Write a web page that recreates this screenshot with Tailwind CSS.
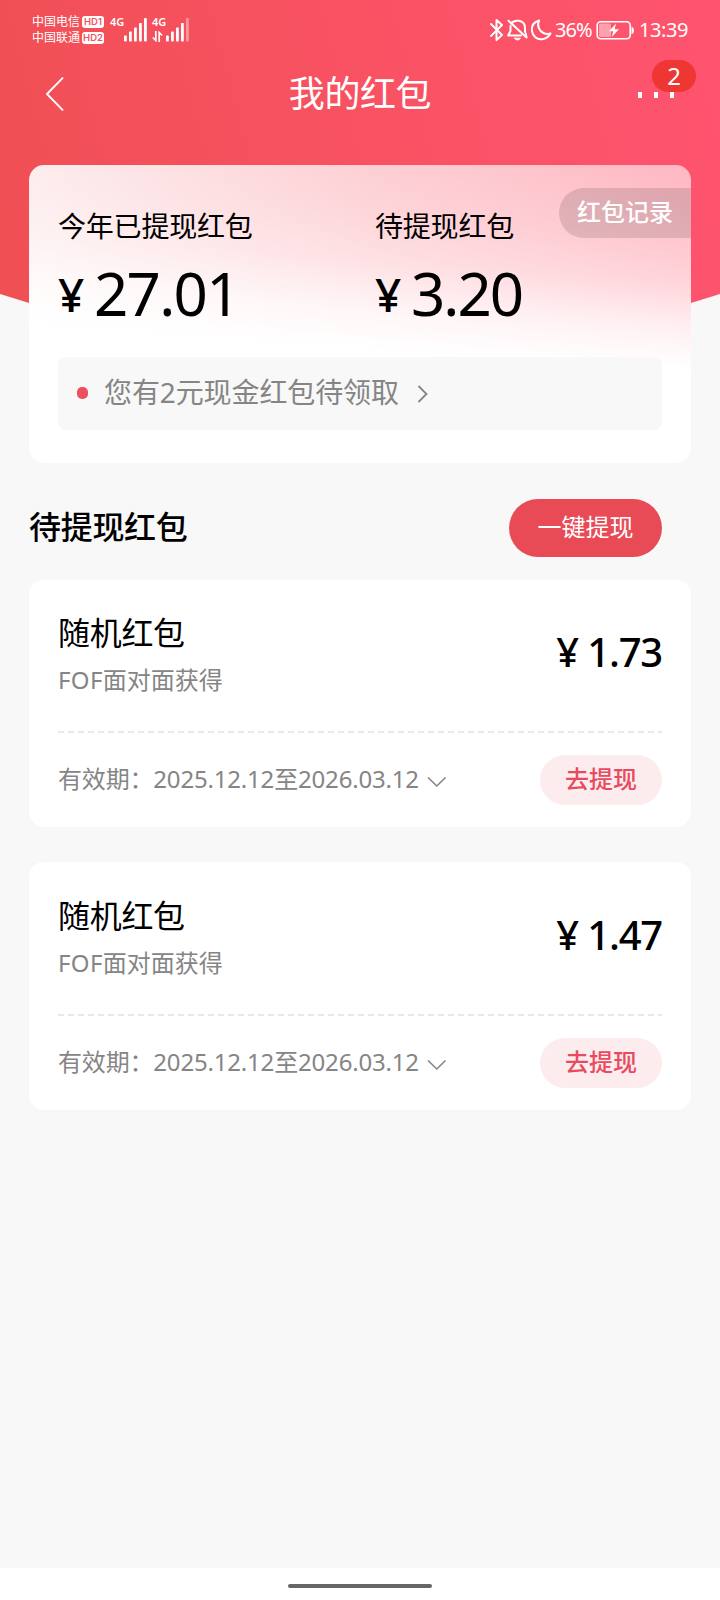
<!DOCTYPE html>
<html lang="zh-CN">
<head>
<meta charset="utf-8">
<title>我的红包</title>
<script src="https://cdn.jsdelivr.net/npm/@tailwindcss/browser@4"></script>
</head>
<body class="bg-[#f8f8f8]">
<div class="relative isolate flex h-[1600px] w-[720px] flex-col overflow-hidden bg-[#f8f8f8] font-['Noto_Sans','Noto_Sans_CJK_SC',sans-serif] text-black">

  <!-- curved header background -->
  <svg class="absolute left-0 top-0 -z-10" width="720" height="360" viewBox="0 0 720 360">
    <defs><linearGradient id="head" gradientUnits="userSpaceOnUse" x1="0" y1="250" x2="720" y2="60"><stop offset="0" stop-color="#f04f54"/><stop offset=".5" stop-color="#f85262"/><stop offset="1" stop-color="#ff536f"/></linearGradient></defs>
    <path d="M0 0H720V294Q360 410 0 294Z" fill="url(#head)"/>
  </svg>

  <!-- status bar -->
  <div class="flex h-[60px] items-start justify-between pl-8 pr-[31px] text-white">
    <div class="flex pt-[14px]">
      <div class="flex flex-col gap-[2px] pt-[1px] text-[12px] leading-[14px]">
        <div class="flex items-center gap-[2px]"><span>中国电信</span><span class="flex h-[12px] w-[22px] items-center justify-center rounded-[3px] bg-white font-['Inter'] text-[9.5px] leading-none font-semibold text-[#f5525e]">HD1</span></div>
        <div class="flex items-center gap-[2px]"><span>中国联通</span><span class="flex h-[12px] w-[22px] items-center justify-center rounded-[3px] bg-white font-['Inter'] text-[9.5px] leading-none font-semibold text-[#f5525e]">HD2</span></div>
      </div>
      <span class="ml-[6px] mt-[2px] w-[14px] text-[11px] leading-[12px] font-semibold">4G</span>
      <svg class="mt-1" width="23" height="24" viewBox="0 0 23 24" fill="#fff"><rect y="17.500" width="2.800" height="6" rx=".8"/><rect x="5" y="13.500" width="2.800" height="10" rx=".8"/><rect x="10" y="9.500" width="2.800" height="14" rx=".8"/><rect x="15" y="5" width="2.800" height="18.500" rx=".8"/><rect x="20" y="0" width="2.800" height="23.500" rx=".8"/></svg>
      <div class="ml-[5px] mt-[2px] flex w-[14px] flex-col">
        <span class="text-[11px] leading-[12px] font-semibold">4G</span>
        <svg class="mt-[3px]" width="12" height="11" viewBox="0 0 12 11" fill="none" stroke="#fff" stroke-width="1.700"><path d="M3.800 0V9.500L.8 6.500M7.200 11V1.500L10.200 4.500"/></svg>
      </div>
      <svg class="mt-1" width="23" height="24" viewBox="0 0 23 24" fill="#fff"><rect y="17.500" width="2.800" height="6" rx=".8"/><rect x="5" y="13.500" width="2.800" height="10" rx=".8"/><rect x="10" y="9.500" width="2.800" height="14" rx=".8"/><rect x="15" y="5" width="2.800" height="18.500" rx=".8"/><rect x="20" y="0" width="2.800" height="23.500" rx=".8" opacity=".4"/></svg>
    </div>
    <div class="flex items-center pt-[18px]">
      <svg width="62" height="24" viewBox="0 0 62 24" fill="none" stroke="#fff" stroke-width="2" stroke-linejoin="round" stroke-linecap="round">
        <path d="M1 6L12 17L6.500 22V2L12 7L1 18"/>
        <path d="M21 5.500C23 3.200 26 2.300 29 2.800C33 3.500 35 6.500 35 10V14M20.500 8V13L18.200 17.500H31M18.500 2.800L36.500 19.500L35.800 15.500"/>
        <path d="M24.500 20.200H30.500Q29.500 22 27.500 22T24.500 20.200Z" fill="#fff" stroke-width=".8"/>
        <path d="M49 2.500C44 4 41.300 8 42 13C42.800 18.500 47 21.800 52 21.200C56 20.800 59 18.500 60.500 15.500C55.500 17 50.500 14.500 48.800 10.200C47.700 7.500 48 4.600 49 2.500Z"/>
      </svg>
      <span class="ml-[3px] w-[41px] text-[20px] leading-6 tracking-[-1px]">36%</span>
      <svg class="mr-[1px]" width="39" height="24" viewBox="0 0 39 24"><rect x="1.200" y="3.800" width="33" height="17" rx="3.500" fill="none" stroke="#fff" stroke-width="1.600"/><rect x="3" y="5.600" width="12" height="13.400" rx="1.500" fill="#fff" fill-opacity=".45"/><path d="M35.500 8.500Q38 9.500 38 12.300T35.500 16.500Z" fill="#fff"/><path d="M20 5.500L13 13.200H17.200L15.800 19L23 11.200H18.700Z" fill="#fff"/></svg>
      <span class="ml-[3px] w-[50px] text-[20px] leading-6 tracking-[-0.4px]">13:39</span>
    </div>
  </div>

  <!-- title bar -->
  <div class="relative flex h-[105px] items-start justify-center text-white">
    <svg class="absolute left-[45px] top-[17px]" width="19" height="34" viewBox="0 0 19 34" fill="none" stroke="#fff" stroke-width="1.900" stroke-linecap="round" stroke-linejoin="round"><path d="M17.500 1.200L2 17L17.500 32.800"/></svg>
    <h1 class="pt-[12px] text-[36px] leading-[44px] tracking-[-0.4px]">我的红包</h1>
    <div class="absolute left-[638px] top-[32px] flex gap-3"><i class="h-[6px] w-1 bg-white"></i><i class="h-[6px] w-1 bg-white"></i><i class="h-[6px] w-1 bg-white"></i></div>
    <div class="absolute left-[652px] top-0 -z-0 flex h-8 w-11 items-center justify-center rounded-full bg-[#ee3733] pb-[1px] text-[24px] leading-none">2</div>
    <i class="absolute left-[670px] top-[32px] h-[6px] w-1 bg-white"></i>
  </div>

  <!-- summary card -->
  <section class="relative mx-[29px] h-[298px] overflow-hidden rounded-[15px] bg-[linear-gradient(184deg,rgba(255,255,255,0)_0%,rgba(255,255,255,0.18)_20%,rgba(255,255,255,0.4)_34%,rgba(255,255,255,0.8)_48%,#fff_60%),linear-gradient(90deg,#fdeaeb_0%,#fdcdd2_50%,#ffb7c2_100%)] px-[29px] pt-[43px]">
    <div class="absolute right-0 top-[23px] flex h-[50px] w-[132px] items-center rounded-l-full bg-black/12 pb-[2px] pl-[18px] text-[24px] leading-none font-medium text-white">红包记录</div>
    <div class="grid grid-cols-[317px_1fr]">
      <div>
        <div class="text-[28px] leading-[36px] tracking-[-0.2px]">今年已提现红包</div>
        <div class="mt-[9px] flex h-[80px] items-center"><span class="w-[36px] pt-[2px] text-[46px] leading-none font-medium">¥</span><span class="text-[60px] leading-none tracking-[-1.7px]">27.01</span></div>
      </div>
      <div>
        <div class="text-[28px] leading-[36px] tracking-[-0.2px]">待提现红包</div>
        <div class="mt-[9px] flex h-[80px] items-center"><span class="w-[36px] pt-[2px] text-[46px] leading-none font-medium">¥</span><span class="text-[60px] leading-none tracking-[-2px]">3.20</span></div>
      </div>
    </div>
    <div class="mt-[24px] flex h-[73px] items-center rounded-[8px] bg-[#f8f8f8] pl-[19px] text-[28px] leading-[36px] text-[#858585]">
      <i class="mb-[2px] h-3 w-[11px] rounded-[5px] bg-[#ee4f5e]"></i>
      <span class="ml-4 pb-[3px] tracking-[-0.1px]">您有2元现金红包待领取</span>
      <svg class="ml-[18px]" width="12" height="18" viewBox="0 0 12 18" fill="none" stroke="#858585" stroke-width="1.800"><path d="M1.500 1L9.500 9L1.500 17"/></svg>
    </div>
  </section>

  <!-- list heading -->
  <div class="flex h-[117px] items-start justify-between pl-[29px] pr-[58px] pt-9">
    <h2 class="pt-[8px] text-[32px] leading-[40px] font-medium tracking-[-0.3px]">待提现红包</h2>
    <button class="flex h-[58px] w-[153px] items-center justify-center rounded-full bg-[#e84a56] pb-[2px] text-[24px] leading-none text-white">一键提现</button>
  </div>

  <!-- red packets -->
  <div class="flex flex-col gap-[35px] px-[29px]">
    <article class="h-[247px] rounded-[15px] bg-white px-[29px]">
      <div class="flex h-[151px] justify-between">
        <div class="pt-[33px]">
          <h3 class="text-[32px] leading-[40px] tracking-[-0.3px]">随机红包</h3>
          <p class="mt-[11px] text-[24px] leading-[32px] text-[#858585]"><span class="tracking-[0.4px]">FOF</span>面对面获得</p>
        </div>
        <div class="flex h-[143px] items-center text-[40px] leading-none font-medium"><span class="w-[31px]">¥</span><span class="tracking-[-1.2px]">1.73</span></div>
      </div>
      <div class="h-[2px] bg-[repeating-linear-gradient(90deg,#e9e9e9_0_6px,transparent_6px_10px)]"></div>
      <div class="flex h-[94px] items-center text-[24px]">
        <span class="pb-[2px] leading-[32px] tracking-[-0.18px] text-[#858585]">有效期：2025.12.12至2026.03.12</span>
        <svg class="ml-[8px] mt-1" width="20" height="12" viewBox="0 0 20 12" fill="none" stroke="#858585" stroke-width="1.600"><path d="M1 1.500L9.800 10L18.500 1.500"/></svg>
        <button class="ml-auto flex h-[50px] w-[122px] items-center justify-center rounded-full bg-[#fdecee] pb-[2px] leading-none font-medium text-[#e84a5e]">去提现</button>
      </div>
    </article>
    <article class="h-[248px] rounded-[15px] bg-white px-[29px]">
      <div class="flex h-[152px] justify-between">
        <div class="pt-[34px]">
          <h3 class="text-[32px] leading-[40px] tracking-[-0.3px]">随机红包</h3>
          <p class="mt-[11px] text-[24px] leading-[32px] text-[#858585]"><span class="tracking-[0.4px]">FOF</span>面对面获得</p>
        </div>
        <div class="flex h-[145px] items-center text-[40px] leading-none font-medium"><span class="w-[31px]">¥</span><span class="tracking-[-1.2px]">1.47</span></div>
      </div>
      <div class="h-[2px] bg-[repeating-linear-gradient(90deg,#e9e9e9_0_6px,transparent_6px_10px)]"></div>
      <div class="flex h-[94px] items-center text-[24px]">
        <span class="pb-[2px] leading-[32px] tracking-[-0.18px] text-[#858585]">有效期：2025.12.12至2026.03.12</span>
        <svg class="ml-[8px] mt-1" width="20" height="12" viewBox="0 0 20 12" fill="none" stroke="#858585" stroke-width="1.600"><path d="M1 1.500L9.800 10L18.500 1.500"/></svg>
        <button class="ml-auto flex h-[50px] w-[122px] items-center justify-center rounded-full bg-[#fdecee] pb-[2px] leading-none font-medium text-[#e84a5e]">去提现</button>
      </div>
    </article>
  </div>

  <!-- system gesture bar -->
  <div class="mt-auto flex h-8 items-start justify-center bg-white pt-4"><i class="h-1 w-36 rounded-full bg-[#666]"></i></div>
</div>
</body>
</html>
